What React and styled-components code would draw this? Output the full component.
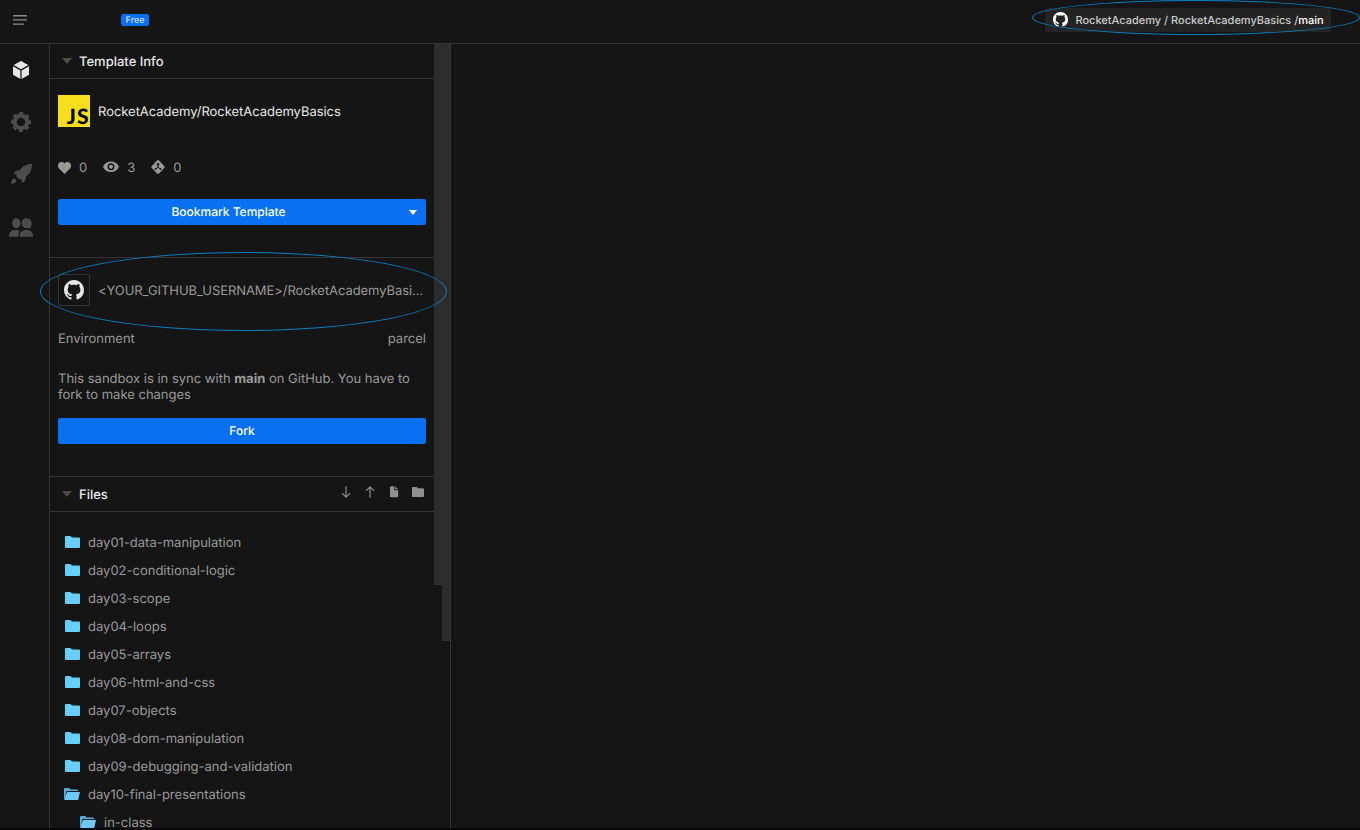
import React from "react";
import styled, { createGlobalStyle } from "styled-components";

const GlobalStyle = createGlobalStyle`
  * { box-sizing: border-box; }
  body {
    margin: 0;
    background: #151515;
    color: #999;
    font-family: Inter, "Liberation Sans", sans-serif;
    font-size: 13px;
    line-height: 16px;
    text-rendering: geometricPrecision;
    -webkit-font-smoothing: antialiased;
    overflow: hidden;
  }
`;

const Page = styled.div`
  position: relative;
  display: flex;
  flex-direction: column;
  width: 1360px;
  height: 830px;
  overflow: hidden;
  border-bottom: 2px solid #0c070d;
`;

const TopBar = styled.header`
  display: flex;
  flex: none;
  align-items: center;
  height: 44px;
  padding: 0 29px 4px 13px;
  border-bottom: 1px solid #343434;
`;

const PlanBadge = styled.span`
  width: 28px;
  height: 12px;
  margin-left: 94px;
  border-radius: 2px;
  background: #0971f1;
  color: #e9f2fe;
  font-size: 9px;
  line-height: 13px;
  text-align: center;
`;

const RepoChip = styled.div`
  display: flex;
  align-items: center;
  gap: 7.5px;
  width: 286px;
  height: 24px;
  margin-left: auto;
  padding-left: 8px;
  border-radius: 2px;
  background: #242424;
  color: #ccc;
  font-size: 11px;
  font-weight: 500;
  white-space: nowrap;
  svg { flex: none; color: #fff; }
  b { color: #fff; font-weight: 500; }
`;

const Body = styled.div`
  display: flex;
  flex: 1;
  min-height: 0;
`;

const Rail = styled.nav`
  display: flex;
  flex: none;
  flex-direction: column;
  align-items: center;
  gap: 28px;
  width: 50px;
  padding: 14px 8px 0 0;
  border-right: 1px solid #343434;
`;

const RailItem = styled.span`
  display: flex;
  align-items: center;
  justify-content: center;
  width: 24px;
  height: 24px;
  color: ${(p) => (p.$active ? "#e6e6e6" : "#4c4c4c")};
`;

const Sidebar = styled.aside`
  display: flex;
  flex: none;
  width: 401px;
  border-right: 1px solid #343434;
`;

const Content = styled.div`
  flex: none;
  width: 384px;
  overflow: hidden;
`;

const ScrollThumb = styled.div`
  width: 8px;
  height: ${(p) => p.$length}px;
  background: #2d2d2d;
`;

const Label = styled.span`
  padding-top: 1px;
  overflow: hidden;
  text-overflow: ellipsis;
  white-space: nowrap;
`;

const SectionHeader = styled.div`
  display: flex;
  align-items: center;
  height: 35px;
  padding: 0 10px 0 12px;
  border-bottom: 1px solid #343434;
  color: #e6e6e6;
  font-weight: 500;
`;

const Caret = styled.i`
  margin: 0 7.5px 0 -0.5px;
  border: 0 solid transparent;
  border-width: ${(p) => (p.$small ? "5px 4px 0" : "6px 5px 0")};
  border-top-color: ${(p) => (p.$small ? "#fff" : "#4c4c4c")};
`;

const FileActions = styled.div`
  display: flex;
  gap: 8px;
  margin: 0 -2px 4px auto;
  color: #8f8f8f;
`;

const Section = styled.section`
  height: ${(p) => p.$height}px;
  padding: 16px 8px 0;
  border-bottom: 1px solid #343434;
`;

const RepoRow = styled.div`
  display: flex;
  align-items: center;
  gap: 8px;
  height: 32px;
  color: ${(p) => (p.$bright ? "#e6e6e6" : "#999")};
  letter-spacing: ${(p) => (p.$bright ? "-0.035px" : "-0.07px")};
`;

const JsLogo = styled.span`
  flex: none;
  width: 32px;
  height: 32px;
  padding: 11px 0.5px 0 0;
  background: #f7df1e;
  color: #000;
  font: 900 21px/22px Lato, sans-serif;
  letter-spacing: 1px;
  text-align: right;
`;

const GithubBox = styled.span`
  display: flex;
  flex: none;
  align-items: center;
  justify-content: center;
  width: 32px;
  height: 32px;
  border: 1px solid #343434;
  border-radius: 2px;
  color: #e6e6e6;
`;

const Stats = styled.div`
  display: flex;
  gap: 16px;
  height: 16px;
  margin: 32px 0 24px;
`;

const Stat = styled.span`
  display: flex;
  align-items: center;
  gap: 8px;
`;

const Button = styled.button`
  display: flex;
  align-items: center;
  width: 100%;
  height: 26px;
  padding: 0;
  border: 0;
  border-radius: 2px;
  background: #0971f1;
  color: #fff;
  font: 500 12px/16px Inter, "Liberation Sans", sans-serif;
  text-rendering: inherit;
  ${Caret} { margin: 0 9px 0 10px; }
`;

const ButtonLabel = styled.span`
  flex: 1;
  text-align: center;
`;

const Pair = styled.div`
  display: flex;
  justify-content: space-between;
  margin: 24px 0 23px;
`;

const Note = styled.p`
  margin: 0 0 15px;
  padding-top: 1px;
  b { font-weight: 700; }
`;

const FileList = styled.ul`
  margin: 0;
  padding: 16px 0 0;
  list-style: none;
`;

const FileRow = styled.li`
  display: flex;
  align-items: center;
  gap: 8px;
  height: 28px;
  padding-left: ${(p) => 14 + p.$depth * 16}px;
`;

const Highlight = styled.div`
  position: absolute;
  left: ${(p) => p.$x}px;
  top: ${(p) => p.$y}px;
  width: ${(p) => p.$w}px;
  height: ${(p) => p.$h}px;
  border: 1px solid #0580c4;
  border-radius: 50%;
  pointer-events: none;
`;

const Github = ({ size }) => (
  <svg width={size} height={size} viewBox="0 0 16 16" fill="currentColor">
    <path d="M8 0C3.58 0 0 3.58 0 8c0 3.54 2.29 6.53 5.47 7.59.4.07.55-.17.55-.38 0-.19-.01-.82-.01-1.49-2.01.37-2.53-.49-2.69-.94-.09-.23-.48-.94-.82-1.13-.28-.15-.68-.52-.01-.53.63-.01 1.08.58 1.23.82.72 1.21 1.87.87 2.33.66.07-.52.28-.87.51-1.07-1.78-.2-3.64-.89-3.64-3.95 0-.87.31-1.59.82-2.15-.08-.2-.36-1.02.08-2.12 0 0 .67-.21 2.2.82.64-.18 1.32-.27 2-.27s1.36.09 2 .27c1.53-1.04 2.2-.82 2.2-.82.44 1.1.16 1.92.08 2.12.51.56.82 1.27.82 2.15 0 3.07-1.87 3.75-3.65 3.95.29.25.54.73.54 1.48 0 1.07-.01 1.93-.01 2.2 0 .21.15.46.55.38A8.01 8.01 0 0 0 16 8c0-4.42-3.58-8-8-8z" />
  </svg>
);

const Menu = () => (
  <svg width="14" height="10" fill="#8b8b8b">
    <path d="M0 0h14v1.4H0zM0 4.2h14v1.4H0zM0 8.4h11v1.4H0z" />
  </svg>
);

const Cube = () => (
  <svg width="24" height="24" viewBox="0 0 24 24" fill="currentColor">
    <path d="M12 3l7.3 4.1L12 11.2 4.7 7.1zM4 8.2l7.4 4.2v8.5L4 16.700zM20 8.200l-7.400 4.200v8.500l7.400-4.200z" />
  </svg>
);

const Gear = () => (
  <svg width="24" height="24" viewBox="0 0 24 24" fill="none" stroke="currentColor">
    <circle cx="12" cy="12" r="6.300" strokeWidth="4" />
    <circle cx="12" cy="12" r="8.900" strokeWidth="2.200" strokeDasharray="4 2.990" strokeDashoffset="2" />
  </svg>
);

const Rocket = () => (
  <svg width="24" height="24" viewBox="0 0 24 24" fill="currentColor">
    <path d="M23 2c-5 0-9 1.500-12.200 6.200-2.500-.3-4.500.6-6.300 3.500l3.200.7c-.5.900-.7 1.600-.2 2.100l2.800 2.800c.5.500 1.200.3 2.100-.200l.7 4.200c3-1.800 4.300-4 3.800-6.700C21.500 11.200 23 7 23 2zM5.500 16.300c-2 .2-3.200 2.200-3.500 5.700 3.200-.3 5.200-1.400 5.500-3.500z" />
  </svg>
);

const People = () => (
  <svg width="24" height="24" viewBox="0 0 24 24" fill="currentColor">
    <ellipse cx="7.300" cy="9.300" rx="4.200" ry="5" />
    <path d="M17.500 4.300c2.500 0 5.100 1.300 5.100 5 0 1.600-.5 2.900-1.200 3.800l1 1.300-2.400-.500c-.7.300-1.400.4-2.100.4-2.800 0-5-2-5-5.300 0-3.300 2.100-4.700 4.600-4.700zM0 22.700c0-4.500 2-6.800 6-6.800 2.200 0 4 .2 5.200.9-1.700 1.200-1.700 3.200-1.700 5.900zM10.700 22.700c0-4.500 2.200-6.800 6.800-6.800s6.500 2.300 6.500 6.800z" />
  </svg>
);

const Heart = () => (
  <svg width="13" height="13" viewBox="0 0 13 13" fill="currentColor">
    <path d="M6.500 13L1.200 7.800C-.4 6.100-.4 3.600 1 2.100c1.500-1.600 4-1.400 5.500.3C8 .7 10.500.5 12 2.100c1.400 1.500 1.400 4-.2 5.700z" />
  </svg>
);

const Eye = () => (
  <svg width="16" height="12" viewBox="0 0 16 12" fill="currentColor" fillRule="evenodd">
    <path d="M8 .5c3.700 0 6.500 2 8 5.300-1.500 3.300-4.300 5.300-8 5.300S1.500 9.100 0 5.800C1.500 2.500 4.300.5 8 .5zm0 1.800a3.500 3.500 0 1 0 0 7 3.500 3.500 0 0 0 0-7zm0 1.500a2 2 0 1 1 0 4 2 2 0 0 1 0-4z" />
  </svg>
);

const ForkIcon = () => (
  <svg width="14" height="14" viewBox="0 0 15 14" preserveAspectRatio="none">
    <path d="M6.400.5q1.100-.9 2.200 0l5.500 5.400q1 1.100 0 2.200l-5.500 5.400q-1.100.9-2.200 0L.9 8.100q-1-1.100 0-2.200z" fill="currentColor" />
    <path d="M7.500 4v3.300L4.500 9.300M7.500 7.300l3 2" fill="none" stroke="#151515" strokeWidth="1" />
    <g fill="#151515"><circle cx="7.500" cy="4.200" r="1.300" /><circle cx="4.800" cy="9.100" r="1" /><circle cx="10.200" cy="9.100" r="1" /></g>
  </svg>
);

const Arrow = ({ up }) => (
  <svg width="16" height="16" viewBox="0 0 16 16" fill="none" stroke="currentColor" strokeWidth="1.200">
    <path d={up ? "M8 13.500V3M4 6.800l4-4 4 4" : "M8 2.500V13M4 9.200l4 4 4-4"} />
  </svg>
);

const NewFile = () => (
  <svg width="16" height="16" viewBox="0 0 16 16" fill="currentColor">
    <path d="M4 3q0-.8.8-.8H8.300v3.300q0 .7.700.7h3.200v6.300q0 .800-.800.800H4.800q-.8 0-.8-.8zM9.200 2.200l3 3.100h-3z" />
  </svg>
);

const NewFolder = () => (
  <svg width="16" height="16" viewBox="0 0 16 16" fill="currentColor">
    <path d="M2 4q0-1 1-1h3.500L8 4.300h5q1 0 1 1V12q0 1-1 1H3q-1 0-1-1z" />
  </svg>
);

const Folder = ({ open }) => (
  <svg width="16" height="14" viewBox="0 0 16 14">
    {open ? (
      <>
        <path d="M0 12V2q0-1 1-1h4l1.500 1.500H13q1 0 1 1V4H3.300q-.8 0-1.100.8L1 10z" fill="#5aaede" />
        <path d="M3.800 5H16l-1.600 7.300q-.2.700-1 .7H.8q-.8 0-.6-.8L2.600 5.800Q2.900 5 3.800 5z" fill="#6ec8fa" />
      </>
    ) : (
      <path d="M1 2q0-1 1-1h4.500L8 2.500h7q1 0 1 1V12q0 1-1 1H2q-1 0-1-1z" fill="#66d1ff" />
    )}
  </svg>
);

const files = [
  { name: "day01-data-manipulation" },
  { name: "day02-conditional-logic" },
  { name: "day03-scope" },
  { name: "day04-loops" },
  { name: "day05-arrays" },
  { name: "day06-html-and-css" },
  { name: "day07-objects" },
  { name: "day08-dom-manipulation" },
  { name: "day09-debugging-and-validation" },
  { name: "day10-final-presentations", open: true },
  { name: "in-class", open: true, depth: 1 },
];

export default function App() {
  return (
    <Page>
      <GlobalStyle />
      <TopBar>
        <Menu />
        <PlanBadge>Free</PlanBadge>
        <RepoChip>
          <Github size={15} />
          <span>RocketAcademy / RocketAcademyBasics /<b>main</b></span>
        </RepoChip>
      </TopBar>
      <Body>
        <Rail>
          <RailItem $active><Cube /></RailItem>
          <RailItem><Gear /></RailItem>
          <RailItem><Rocket /></RailItem>
          <RailItem><People /></RailItem>
        </Rail>
        <Sidebar>
          <Content>
            <SectionHeader><Caret /><Label>Template Info</Label></SectionHeader>
            <Section $height={179}>
              <RepoRow $bright>
                <JsLogo>JS</JsLogo>
                <Label>RocketAcademy/RocketAcademyBasics</Label>
              </RepoRow>
              <Stats>
                <Stat><Heart /><Label>0</Label></Stat>
                <Stat><Eye /><Label>3</Label></Stat>
                <Stat><ForkIcon /><Label>0</Label></Stat>
              </Stats>
              <Button>
                <ButtonLabel>Bookmark Template</ButtonLabel>
                <Caret $small />
              </Button>
            </Section>
            <Section $height={219}>
              <RepoRow>
                <GithubBox><Github size={20} /></GithubBox>
                <Label>&lt;YOUR_GITHUB_USERNAME&gt;/RocketAcademyBasi…</Label>
              </RepoRow>
              <Pair><Label>Environment</Label><Label>parcel</Label></Pair>
              <Note>This sandbox is in sync with <b>main</b> on GitHub. You have to fork to make changes</Note>
              <Button><ButtonLabel>Fork</ButtonLabel></Button>
            </Section>
            <SectionHeader>
              <Caret /><Label>Files</Label>
              <FileActions><Arrow /><Arrow up /><NewFile /><NewFolder /></FileActions>
            </SectionHeader>
            <FileList>
              {files.map((f) => (
                <FileRow key={f.name} $depth={f.depth || 0}>
                  <Folder open={f.open} />
                  <Label>{f.name}</Label>
                </FileRow>
              ))}
            </FileList>
          </Content>
          <ScrollThumb $length={541} />
          <ScrollThumb $length={597} />
        </Sidebar>
      </Body>
      <Highlight $x={1032} $y={0} $w={328} $h={35} />
      <Highlight $x={40} $y={252} $w={407} $h={79} />
    </Page>
  );
}
